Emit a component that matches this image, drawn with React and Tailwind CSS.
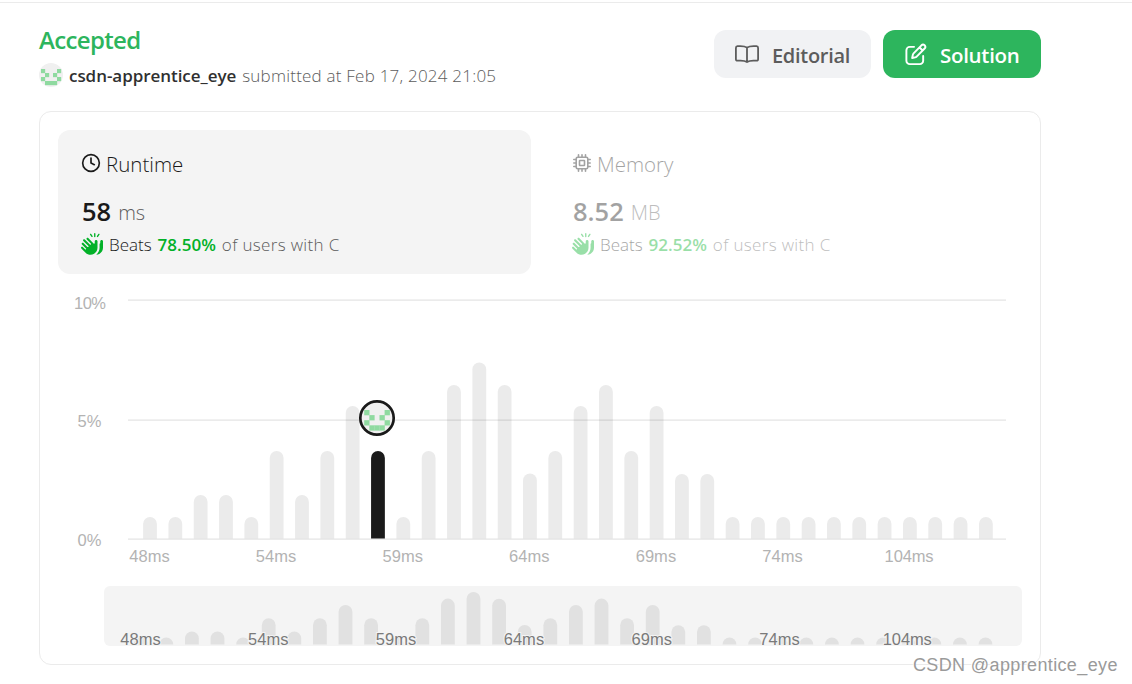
import { Clock } from 'lucide-react'
import { FaHandsClapping } from 'react-icons/fa6'

// bar height (px) per runtime bucket in the big chart
const BARS = [
  22, 22, 44, 44, 22, 88, 44, 88, 133, 88, 22, 88, 154, 176.5, 154, 65.5, 88,
  133, 154, 88, 133, 65, 65, 22, 22, 22, 22, 22, 22, 22, 22, 22, 22, 22,
]
const ACTIVE = 9
const LABELS = ['48ms', '54ms', '59ms', '64ms', '69ms', '74ms', '104ms']

const FACE = [[1, 1], [5, 1], [2, 2], [4, 2], [1, 3], [5, 3], [2, 4], [3, 4], [4, 4]]

function Face() {
  return (
    <g fill="#8fdaa0">
      {FACE.map(([x, y]) => (
        <rect key={`${x}-${y}`} x={x - 1} y={y - 1} width="1.04" height="1.04" />
      ))}
    </g>
  )
}

function Avatar() {
  return (
    <svg className="size-6" viewBox="0 0 24 24">
      <circle cx="12" cy="12" r="12" fill="#f0f0f0" />
      <g transform="translate(2 6) scale(4)">
        <Face />
      </g>
    </svg>
  )
}

function BookIcon() {
  return (
    <svg className="h-[18px] w-6" viewBox="0 0 24 18" fill="none" stroke="currentColor" strokeWidth="1.8" strokeLinecap="round" strokeLinejoin="round">
      <path d="M12 2.600v14M12 2.600C10 1.100 6.300 .9 2.500 1.200Q.9 1.400 .9 2.900V14.200Q.9 15.800 2.500 15.700C6.500 15.300 9.500 15.300 12 17C14.500 15.300 17.500 15.300 21.500 15.700Q23.100 15.800 23.100 14.200V2.900Q23.100 1.400 21.500 1.200C17.700 .9 14 1.100 12 2.600" />
    </svg>
  )
}

function PenIcon() {
  return (
    <svg className="size-[23px]" viewBox="0 0 24 24" fill="none" stroke="currentColor" strokeWidth="2" strokeLinecap="round" strokeLinejoin="round">
      <path d="M10.500 4H6a3.500 3.500 0 0 0-3.500 3.500v11A3.500 3.500 0 0 0 6 22h10.500a3.500 3.500 0 0 0 3.500-3.500v-5" />
      <path d="M18.200 2.400a2.300 2.300 0 0 1 3.300 3.300l-8.300 8.500a3 3 0 0 1-1.500.8l-3.200.7.7-3.300a3 3 0 0 1 .8-1.500zM16.300 4.700l3.100 3.100" />
    </svg>
  )
}

function ChipIcon() {
  return (
    <svg className="size-[18px]" viewBox="0 0 18 18" fill="none" stroke="currentColor" strokeWidth="1.6" strokeLinecap="round">
      <rect x="3.2" y="3.2" width="11.6" height="11.6" rx="1.6" />
      <rect x="6.500" y="6.500" width="5" height="5" rx=".4" />
      <path d="M5.500 .8v2M9 .8v2M12.500 .8v2M5.500 15.200v2M9 15.200v2M12.500 15.200v2M.8 5.500h2M.8 9h2M.8 12.500h2M15.200 5.500h2M15.200 9h2M15.200 12.500h2" />
    </svg>
  )
}

function Stat({ icon, title, value, unit, beats, active }) {
  return (
    <div className={active ? 'h-36 w-[473px] rounded-xl bg-[#f4f4f4] px-6 pt-[19px]' : 'h-36 w-[473px] px-6 pt-[19px] opacity-40'}>
      <div className="flex h-7 items-center gap-[6px] text-[20.5px]">
        <span className="text-[#1a1a1a]">{icon}</span>
        <span className="mt-0.5 font-light text-[#1a1a1a]">{title}</span>
      </div>
      <div className="mt-[15px] flex h-9 items-baseline gap-[7px]">
        <span className="text-[25.500px] font-semibold text-[#1a1a1a]">{value}</span>
        <span className="-translate-y-px text-[20px] font-light text-[#5c5c5c]">{unit}</span>
      </div>
      <div className="mt-[5px] flex h-6 items-center text-[17px] whitespace-pre">
        <FaHandsClapping className="-mt-0.5 -ml-px size-[22px] text-[#02b128]" />
        <span className="ml-[6px] font-light text-[#1a1a1a]">Beats</span>
        <span className="ml-[6px] font-semibold text-[#02b128]">{beats}</span>
        <span className="ml-[6px] font-light tracking-[0.35px] text-[#5c5c5c]">of users with C</span>
      </div>
    </div>
  )
}

// rounded top, flat bottom
function barPath(x, bottom, h, w = 13.8) {
  const r = w / 2
  return `M${x} ${bottom}V${bottom - h + r}a${r} ${r} 0 0 1 ${w} 0V${bottom}Z`
}

function Chart() {
  return (
    <svg className="block h-[290px] w-[964px]" viewBox="58 286 964 290" fontFamily="'Liberation Sans', Arial, sans-serif" fontSize="16.500">
      {BARS.map((h, i) => (
        <path key={i} d={barPath(143.1 + i * 25.33, 538.4, h - 0.6)} fill={i === ACTIVE ? '#1a1a1a' : '#ebebeb'} />
      ))}
      <g fill="#000" fillOpacity="0.08">
        <rect x="128" y="299.300" width="878" height="1.700" />
        <rect x="128" y="419.300" width="878" height="1.700" />
        <rect x="128" y="538.300" width="878" height="1.700" />
      </g>
      <g fill="#b3b3b3">
        <text x="74" y="309" textLength="32">10%</text>
        <text x="77.500" y="427" textLength="24">5%</text>
        <text x="77.500" y="546" textLength="24">0%</text>
        {LABELS.map((t, i) => (
          <text key={t} x={149.5 + i * 126.6} y="562" textAnchor="middle" textLength={t.length > 4 ? 49 : 40.5}>{t}</text>
        ))}
      </g>
      <circle cx="377" cy="418" r="16.700" fill="#f0f0f0" stroke="#1a1a1a" strokeWidth="2.700" />
      <g transform="translate(364.200 410) scale(5.100)">
        <Face />
      </g>
    </svg>
  )
}

function Brush() {
  return (
    <div className="mt-[10px] ml-[46px] h-[60px] w-[918px] rounded-md bg-[#f4f4f4]">
      <svg className="block h-[60px] w-[918px] overflow-visible" viewBox="104 586 918 60" fontFamily="'Liberation Sans', Arial, sans-serif" fontSize="16.500">
        {BARS.map((h, i) => (
          <path key={i} d={barPath(133.8 + i * 25.6, 644.5, Math.max(h * 0.298, 7))} fill="#e1e1e1" />
        ))}
        <g fill="#7a7a7a" stroke="#f4f4f4" strokeWidth="2" paintOrder="stroke">
          {LABELS.map((t, i) => (
            <text key={t} x={140.5 + i * 127.8} y="644.500" textAnchor="middle" textLength={t.length > 4 ? 49 : 40.5}>{t}</text>
          ))}
        </g>
      </svg>
    </div>
  )
}

export default function App() {
  return (
    <div className="relative h-[684px] w-[1132px] overflow-hidden bg-white pt-[2px] font-['Open_Sans','Noto_Sans',sans-serif]">
      <div className="h-px bg-[#ebebeb]" />
      <div className="flex h-[108px] w-[1041px] justify-between pl-[39px]">
        <div className="pt-[21px]">
          <h1 className="h-8 text-[24px] leading-8 font-semibold tracking-[-0.65px] text-[#2db55d]">Accepted</h1>
          <div className="mt-[5px] flex h-7 items-center text-[17px]">
            <Avatar />
            <span className="mt-0.5 ml-[6px] font-semibold tracking-[-0.05px] text-[#303030]">csdn-apprentice_eye</span>
            <span className="mt-0.5 ml-[6px] font-light tracking-[0.22px] text-[#5c5c5c]">submitted at Feb 17, 2024 21:05</span>
          </div>
        </div>
        <div className="flex gap-3 pt-[27px]">
          <button className="flex h-12 w-[157px] items-center rounded-xl bg-[#f1f2f4] pl-[21px] text-[20px] font-semibold text-[#5c5c5c]">
            <BookIcon />
            <span className="mt-[3px] ml-[13px] tracking-[-0.3px]">Editorial</span>
          </button>
          <button className="flex h-12 w-[158px] items-center rounded-xl bg-[#2db55d] pl-[21px] text-[20.5px] font-semibold text-white">
            <PenIcon />
            <span className="mt-0.5 ml-[13px] tracking-[-0.3px]">Solution</span>
          </button>
        </div>
      </div>
      <div className="ml-[39px] h-[554px] w-[1002px] rounded-xl border border-[#ebebeb] pt-[18px] pl-[18px]">
        <div className="flex gap-[18px]">
          <Stat icon={<Clock className="-mr-px -ml-px" size={20} strokeWidth={2} />} title="Runtime" value="58" unit="ms" beats="78.50%" active />
          <Stat icon={<ChipIcon />} title="Memory" value="8.52" unit="MB" beats="92.52%" />
        </div>
        <div className="pt-3">
          <Chart />
          <Brush />
        </div>
      </div>
      <div className="absolute top-[653px] left-[913px] font-['Liberation_Sans',Arial,sans-serif] text-[18px] leading-6 tracking-[0.37px] whitespace-nowrap text-[#9a9a9a] [text-shadow:-1px_-1px_0_#fff]">
        CSDN @apprentice_eye
      </div>
    </div>
  )
}
